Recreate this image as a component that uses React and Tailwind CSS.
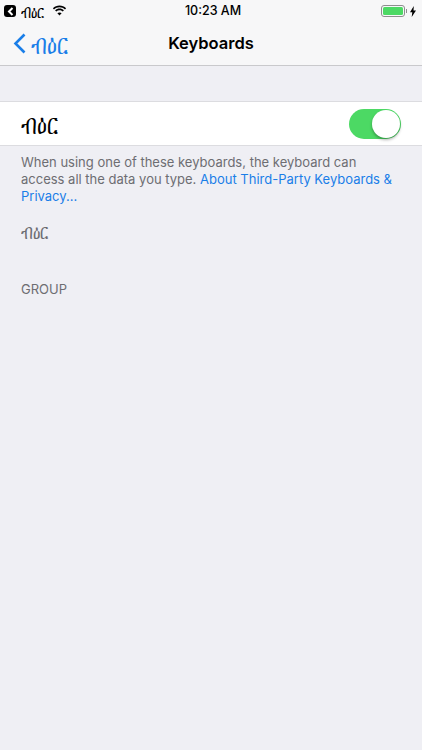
import React from "react";

const font = { fontFamily: "Inter" };

function AppName({ className }) {
  return <span className={"inline-block scale-y-[1.4] " + className}>ብዕር</span>;
}

function WifiIcon() {
  return (
    <svg width="15" height="11" viewBox="0 0 15 11" fill="#000">
      <path d="M7.5 2.2c2.1 0 4 .8 5.5 2.2l1.1-1.2C12.3 1.5 10 .5 7.5.5S2.7 1.5.9 3.2L2 4.4c1.5-1.4 3.4-2.2 5.5-2.2z" />
      <path d="M7.5 5.3c1.2 0 2.3.5 3.2 1.3l1.2-1.2C10.700 4.200 9.200 3.600 7.500 3.600s-3.200.6-4.400 1.800l1.200 1.200c.9-.8 2-1.300 3.200-1.300z" />
      <path d="M7.500 10.500l2.100-2.200c-.5-.6-1.300-.9-2.100-.9s-1.600.3-2.100.9z" />
    </svg>
  );
}

function BackBadge() {
  return (
    <div className="w-[12px] h-[12px] rounded-[3px] bg-black flex items-center justify-center">
      <svg width="7" height="9" viewBox="0 0 7 9" fill="none" stroke="#fff" strokeWidth="2">
        <path d="M5.500 1L2 4.500 5.500 8" />
      </svg>
    </div>
  );
}

function Battery() {
  return (
    <div className="flex items-center gap-[2px]">
      <div className="flex items-center">
        <div className="w-[24px] h-[12px] rounded-[3px] border border-[#8e8e8e] p-[1px]">
          <div className="w-full h-full rounded-[1.5px] bg-[#4cd964]" />
        </div>
        <div className="w-[1px] h-[4px] bg-[#8e8e8e] ml-[1px]" />
      </div>
      <svg width="6" height="11" viewBox="0 0 6 11" fill="#000" className="ml-[1px]">
        <path d="M3.800 0L0 6.200h2.300L1.700 11 6 4.400H3.500z" />
      </svg>
    </div>
  );
}

export default function App() {
  return (
    <div className="w-[422px] h-[750px] bg-[#efeff4] flex flex-col overflow-hidden" style={font}>
      {/* Status + nav bar */}
      <div className="h-[66px] bg-[#f7f7f8] border-b border-[#c9c9cc] flex flex-col shrink-0">
        <div className="h-[22px] pl-[4px] pr-[6px] flex items-center justify-between">
          <div className="flex items-center gap-[5px] w-[140px]">
            <BackBadge />
            <AppName className="text-[13px] leading-none text-black" />
            <div className="ml-[3px] mb-[2px]">
              <WifiIcon />
            </div>
          </div>
          <span className="text-[12.500px] font-medium text-black pl-[6px] pt-[1px]">10:23 AM</span>
          <div className="w-[140px] flex justify-end">
            <Battery />
          </div>
        </div>
        <div className="flex-1 flex items-center justify-between pl-[13px] pr-[13px]">
          <div className="flex items-center gap-[5px] w-[100px]">
            <svg width="13" height="21" viewBox="0 0 13 21" fill="none" stroke="#1a7ee8" strokeWidth="2.600">
              <path d="M11.500 1.500L2.500 10.500l9 9" />
            </svg>
            <AppName className="text-[20px] leading-none text-[#1a7ee8]" />
          </div>
          <span className="text-[16.500px] font-semibold text-black">Keyboards</span>
          <div className="w-[100px]" />
        </div>
      </div>

      {/* Toggle row */}
      <div className="mt-[35px] h-[45px] bg-white border-y border-[#dcdce0] flex items-center justify-between pl-[21px] pr-[21px] shrink-0">
        <AppName className="text-[20px] leading-none text-black" />
        <div className="w-[52px] h-[30px] rounded-full bg-[#4cd964] flex items-center justify-end pr-[1px]">
          <div className="w-[28px] h-[28px] rounded-full bg-white shadow-[0_2px_3px_rgba(0,0,0,0.3)]" />
        </div>
      </div>

      {/* Footer text */}
      <p className="mt-[8px] px-[21px] text-[13px] leading-[17px] text-[#6d6d72]">
        When using one of these keyboards, the keyboard can access all the data you type.{" "}
        <span className="text-[#1a7ee8]">About Third-Party Keyboards &amp; Privacy...</span>
      </p>

      <div className="mt-[18px] px-[21px] h-[17px] flex items-center">
        <AppName className="text-[15px] leading-none text-[#6d6d72]" />
      </div>

      <div className="mt-[41px] px-[21px] text-[13px] leading-[17px] text-[#6d6d72]">GROUP</div>
    </div>
  );
}
